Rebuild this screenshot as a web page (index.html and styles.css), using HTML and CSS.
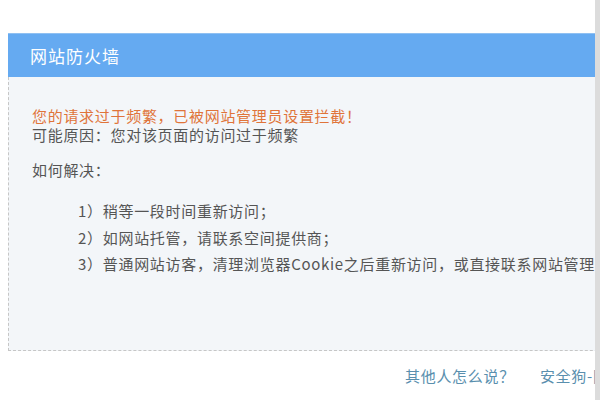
FILE: index.html
```html
<!DOCTYPE html>
<html lang="zh-CN">
<head>
<meta charset="utf-8">
<title>网站防火墙</title>
<link rel="stylesheet" href="styles.css">
</head>
<body>
<div class="page">
  <div class="card">
    <div class="card-head">网站防火墙</div>
    <div class="card-body">
      <p class="warn">您的请求过于频繁，已被网站管理员设置拦截！</p>
      <p class="line">可能原因：您对该页面的访问过于频繁</p>
      <p class="line how">如何解决：</p>
      <ul class="steps">
        <li>1）稍等一段时间重新访问；</li>
        <li>2）如网站托管，请联系空间提供商；</li>
        <li>3）普通网站访客，清理浏览器Cookie之后重新访问，或直接联系网站管理员</li>
      </ul>
    </div>
  </div>
  <div class="footer">
    <a class="flink">其他人怎么说？</a>
    <a class="flink">安全狗-网站安全狗</a>
  </div>
</div>
</body>
</html>
```
FILE: styles.css
```css
html, body {
  margin: 0;
  padding: 0;
  background: #dcdcdc;
}
body {
  font-family: "Noto Sans CJK SC", "Microsoft YaHei", sans-serif;
  white-space: nowrap;
}
.page {
  width: 595px;
  height: 400px;
  background: #ffffff;
  overflow: hidden;
  padding: 33px 0 0 8px;
  box-sizing: border-box;
}
.card {
  width: 640px;
}
.card-head {
  height: 43px;
  border-top: 1px solid #8fc0f2;
  background: #65aaf1;
  color: #ffffff;
  font-size: 17px;
  line-height: 43px;
  padding-left: 22px;
  letter-spacing: 1px;
}
.card-body {
  background: #f3f6f9;
  border-left: 1px dashed #c6c6c6;
  border-bottom: 1px dashed #c6c6c6;
  padding: 29px 0 0 23px;
  height: 244px;
  font-size: 15px;
  letter-spacing: 0.7px;
  color: #555555;
  font-family: "Noto Sans CJK TC", "Noto Sans CJK SC", sans-serif;
}
.card-body p {
  margin: 0;
  line-height: 19px;
}
.warn {
  color: #e0743a;
}
.how {
  margin-top: 16px !important;
}
.steps {
  list-style: none;
  margin: 19px 0 0 0;
  padding: 0 0 0 46px;
}
.steps li {
  line-height: 26.5px;
}
.footer {
  display: flex;
  gap: 25px;
  margin-left: 397px;
  margin-top: 15px;
  font-size: 15px;
  letter-spacing: 0.7px;
  line-height: 19px;
  font-family: "Noto Sans CJK TC", "Noto Sans CJK SC", sans-serif;
}
.flink {
  color: #5a8fae;
  text-decoration: none;
}
```
